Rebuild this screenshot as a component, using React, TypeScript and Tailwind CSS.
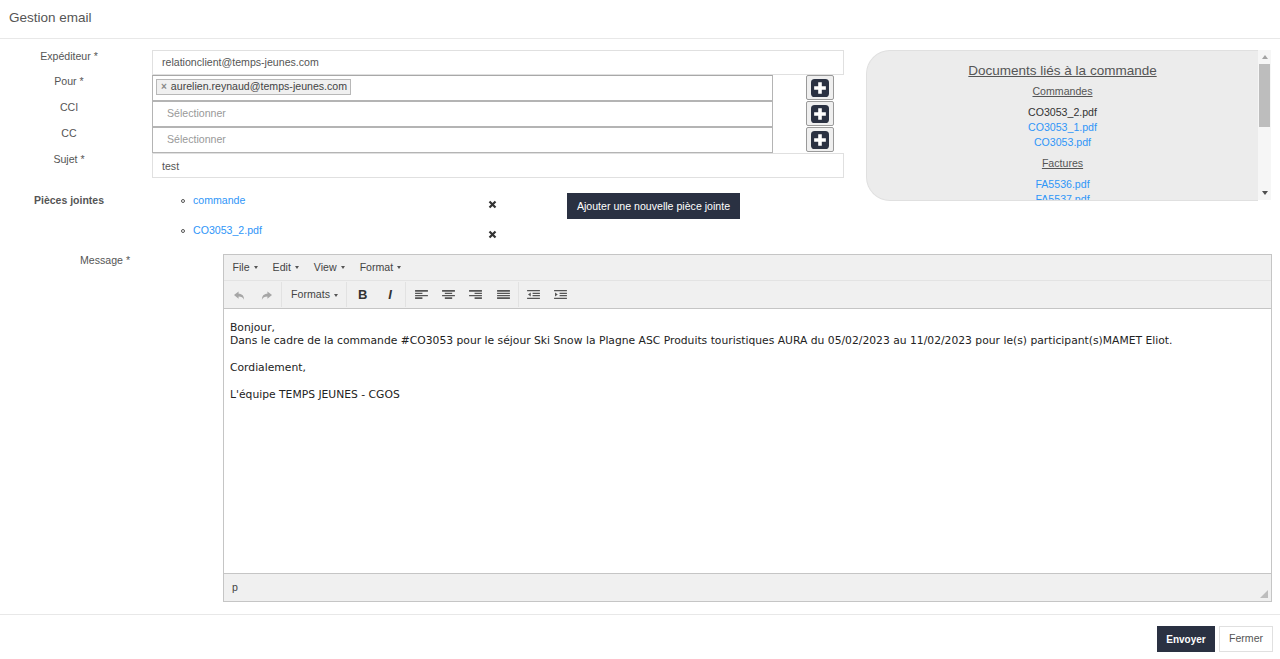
import React from "react";

const Plus = () => (
  <button className="w-[28px] h-[25px] flex items-center justify-center bg-[#efefef] border border-[#9a9a9a] rounded-[2px]">
    <svg width="18" height="18" viewBox="0 0 20 20">
      <rect x="0" y="0" width="20" height="20" rx="4" fill="#2a3142" />
      <path d="M8 3.5h4V8h4.5v4H12v4.5H8V12H3.5V8H8z" fill="#fff" />
    </svg>
  </button>
);

const Label = ({ children }: { children: React.ReactNode }) => (
  <div className="w-[138px] shrink-0 text-center text-[10.6px] leading-[13px] text-[#555]">{children}</div>
);

const Close = () => (
  <svg width="9" height="9" viewBox="0 0 9 9">
    <path d="M1.5 1.5l6 6M7.5 1.5l-6 6" stroke="#333" strokeWidth="2.2" strokeLinecap="butt" />
  </svg>
);

const Caret = ({ color = "#555" }: { color?: string }) => (
  <span className="inline-block ml-[4px] mt-[1px] border-x-[2.5px] border-x-transparent border-t-[3px]" style={{ borderTopColor: color }} />
);

const Menu = ({ t }: { t: string }) => (
  <span className="px-[7.5px] text-[10.6px] text-[#444] flex items-center">
    {t}
    <Caret />
  </span>
);

const Slot = ({ children, cls = "" }: { children: React.ReactNode; cls?: string }) => (
  <span className={`w-[27.3px] shrink-0 flex items-center justify-center ${cls}`}>{children}</span>
);

const Lines = ({ d }: { d: string }) => (
  <Slot>
    <svg width="13" height="11" viewBox="0 0 14 12">
      <path d={d} fill="#555" />
    </svg>
  </Slot>
);

const Sep = ({ cls }: { cls: string }) => <div className={`w-px h-[25px] bg-[#e2e2e2] shrink-0 ${cls}`} />;

export default function App() {
  return (
    <div className="w-[1280px] h-[659px] bg-white overflow-hidden flex flex-col font-['Liberation_Sans',Arial,sans-serif]">
      <div className="h-[39px] shrink-0 border-b border-[#e8e8e8] pl-[9px] pt-[9px] text-[13.5px] leading-[18px] text-[#555]">Gestion email</div>
      <div className="flex pt-[11px] shrink-0">
        <div className="w-[844px] shrink-0">
          <div className="flex h-[25px]">
            <Label>Expéditeur *</Label>
            <div className="ml-[14px] w-[692px] border border-[#e0e0e0] pl-[9px] text-[10.6px] leading-[22px] text-[#555]">relationclient@temps-jeunes.com</div>
          </div>
          <div className="flex h-[26px]">
            <Label>Pour *</Label>
            <div className="ml-[14px] w-[621px] border border-[#b4b4b4] border-t-[#a8a8a8] pl-[3px] pt-[3px] flex items-start">
              <span className="flex items-center h-[16px] border border-[#b8b8b8] bg-[#f0f0f0] pl-[4px] pr-[3px] text-[10.6px] text-[#444]">
                <span className="text-[10px] font-bold text-[#888] mr-[4px] leading-none">×</span>aurelien.reynaud@temps-jeunes.com
              </span>
            </div>
            <div className="ml-[33px]"><Plus /></div>
          </div>
          <div className="flex h-[26px]">
            <Label>CCI</Label>
            <div className="ml-[14px] w-[621px] border border-[#b4b4b4] pl-[14px] text-[10.6px] leading-[22px] text-[#999]">Sélectionner</div>
            <div className="ml-[33px]"><Plus /></div>
          </div>
          <div className="flex h-[26px]">
            <Label>CC</Label>
            <div className="ml-[14px] w-[621px] border border-[#b4b4b4] pl-[14px] text-[10.6px] leading-[22px] text-[#999]">Sélectionner</div>
            <div className="ml-[33px]"><Plus /></div>
          </div>
          <div className="flex h-[25px]">
            <Label>Sujet *</Label>
            <div className="ml-[14px] w-[692px] border border-[#e0e0e0] pl-[9px] text-[10.6px] leading-[24px] text-[#555]">test</div>
          </div>
          <div className="flex mt-[15px] h-[62px]">
            <div className="w-[138px] shrink-0 text-center text-[10.5px] leading-[14px] font-bold text-[#555]">Pièces jointes</div>
            <div className="ml-[43px] w-[316px] shrink-0 flex flex-col gap-[16px] pt-[1px]">
              <div className="flex items-center h-[14px] text-[10.6px]">
                <span className="w-[4px] h-[4px] rounded-full border border-[#555] mr-[8px]" />
                <span className="text-[#2f96f8] w-[295px]">commande</span>
                <span className="mt-[7px]"><Close /></span>
              </div>
              <div className="flex items-center h-[14px] text-[10.6px]">
                <span className="w-[4px] h-[4px] rounded-full border border-[#555] mr-[8px]" />
                <span className="text-[#2f96f8] w-[295px]">CO3053_2.pdf</span>
                <span className="mt-[7px]"><Close /></span>
              </div>
            </div>
            <div className="ml-[70px] w-[173px] h-[26px] pt-[1px] bg-[#2a3142] text-white text-[10.6px] flex items-center justify-center shrink-0 whitespace-nowrap">Ajouter une nouvelle pièce jointe</div>
          </div>
        </div>
        <div className="ml-[22px] w-[405px] h-[151px] flex">
          <div className="w-[392px] h-[151px] overflow-hidden bg-[#ececec] border border-[#e0e0e0] border-r-0 rounded-l-[24px] text-center pt-[12px] text-[10.6px] text-[#333]">
            <div className="text-[13.5px] leading-[16px] underline text-[#555]">Documents liés à la commande</div>
            <div className="mt-[5px] leading-[14px] underline text-[#555]">Commandes</div>
            <div className="mt-[7px] leading-[15px] text-[#333]">CO3053_2.pdf</div>
            <div className="leading-[15px] text-[#2f96f8]">CO3053_1.pdf</div>
            <div className="leading-[15px] text-[#2f96f8]">CO3053.pdf</div>
            <div className="mt-[6px] leading-[14px] underline text-[#555]">Factures</div>
            <div className="mt-[7px] leading-[15px] text-[#2f96f8]">FA5536.pdf</div>
            <div className="leading-[15px] text-[#2f96f8]">FA5537.pdf</div>
          </div>
          <div className="w-[13px] h-[150px] bg-[#f6f6f6] flex flex-col items-center">
            <div className="h-[14px] flex items-center justify-center">
              <span className="border-x-[3.5px] border-x-transparent border-b-[4px] border-b-[#a3a3a3]" />
            </div>
            <div className="w-[11px] h-[63px] bg-[#bdbdbd]" />
            <div className="flex-1" />
            <div className="h-[14px] flex items-center justify-center">
              <span className="border-x-[3.5px] border-x-transparent border-t-[4px] border-t-[#505050]" />
            </div>
          </div>
        </div>
      </div>
      <div className="flex h-[348px] shrink-0 mt-[-1px]">
        <div className="w-[210px] shrink-0 pl-[80px] text-[10.6px] leading-[13px] text-[#555]">Message *</div>
        <div className="ml-[13px] w-[1049px] h-[348px] border border-[#c5c5c5] flex flex-col">
          <div className="h-[26px] bg-[#f0f0f0] border-b border-[#e3e3e3] flex items-center pl-[1px]">
            <Menu t="File" />
            <Menu t="Edit" />
            <Menu t="View" />
            <Menu t="Format" />
          </div>
          <div className="h-[28px] bg-[#f0f0f0] border-b border-[#c5c5c5] flex items-center pl-[1.5px]">
            <Slot cls="pt-[1px]">
              <svg width="13" height="11" viewBox="0 0 14 12">
                <path d="M6 1.5L1 5.5l5 4V7c3 0 5 1 6 3.5C12 6.5 10 4 6 4z" fill="#a6a6a6" />
              </svg>
            </Slot>
            <Slot cls="pt-[1px]">
              <svg width="13" height="11" viewBox="0 0 14 12">
                <path d="M8 1.5l5 4-5 4V7C5 7 3 8 2 10.5 2 6.5 4 4 8 4z" fill="#a6a6a6" />
              </svg>
            </Slot>
            <Sep cls="ml-[1px]" />
            <span className="pl-[9px] pt-[1px] text-[10.6px] text-[#444] flex items-center w-[64px] shrink-0">Formats<Caret /></span>
            <Sep cls="" />
            <Slot cls="ml-[2px] pt-[1px] text-[13px] leading-[16px] font-bold text-[#333]">B</Slot>
            <Slot cls="pt-[1px] text-[13px] leading-[16px] font-bold italic text-[#333]">I</Slot>
            <Sep cls="ml-[1px] mr-[2px]" />
            <Lines d="M0 1h14v2H0zM0 4h8v1.5H0zM0 6.5h14V8H0zM0 9h8v2H0z" />
            <Lines d="M0 1h14v2H0zM3 4h8v1.5H3zM0 6.5h14V8H0zM3 9h8v2H3z" />
            <Lines d="M0 1h14v2H0zM6 4h8v1.5H6zM0 6.5h14V8H0zM6 9h8v2H6z" />
            <Lines d="M0 1h14v2H0zM0 4h14v1.5H0zM0 6.5h14V8H0zM0 9h14v2H0z" />
            <Sep cls="ml-[1px] mr-[1px]" />
            <Lines d="M0 1h14v1.5H0zM6 4h8v1.5H6zM6 6.5h8V8H6zM0 9.5h14V11H0zM4 3.8v4.4L1 6z" />
            <Lines d="M0 1h14v1.5H0zM6 4h8v1.5H6zM6 6.5h8V8H6zM0 9.5h14V11H0zM1 3.8v4.4L4 6z" />
          </div>
          <div className="flex-1 bg-white pl-[6px] pt-[12px] font-['DejaVu_Sans',Verdana,sans-serif] text-[10.75px] leading-[13.4px] text-[#222]">
            <p>Bonjour,</p>
            <p>Dans le cadre de la commande #CO3053 pour le séjour Ski Snow la Plagne ASC Produits touristiques AURA du 05/02/2023 au 11/02/2023 pour le(s) participant(s)MAMET Eliot.</p>
            <p className="mt-[13.4px]">Cordialement,</p>
            <p className="mt-[13.4px]">L'équipe TEMPS JEUNES - CGOS</p>
          </div>
          <div className="h-[28px] bg-[#f0f0f0] border-t border-[#c5c5c5] flex items-center justify-between pl-[8px] pr-[2px] text-[10.6px] text-[#444]">
            <span>p</span>
            <svg width="10" height="10" viewBox="0 0 10 10" className="self-end mb-[2px]">
              <path d="M9 1v8H1z" fill="#bdbdbd" />
            </svg>
          </div>
        </div>
      </div>
      <div className="mt-[12px] border-t border-[#e8e8e8] flex justify-end pt-[11px] pr-[7px] gap-[4px]">
        <button className="w-[58px] h-[26px] bg-[#2a3142] text-white text-[10px] font-bold">Envoyer</button>
        <button className="w-[54px] h-[26px] bg-white border border-[#e0e0e0] text-[#555] text-[10.6px]">Fermer</button>
      </div>
    </div>
  );
}
